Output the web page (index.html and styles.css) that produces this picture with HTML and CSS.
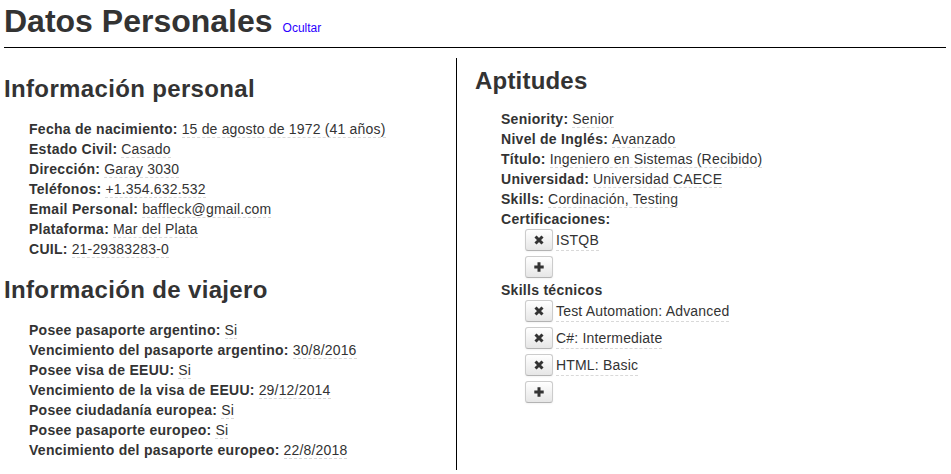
FILE: index.html
```html
<!DOCTYPE html>
<html lang="es">
<head>
<meta charset="utf-8">
<title>Datos Personales</title>
<link rel="stylesheet" href="styles.css">
</head>
<body>
<div class="page">
  <div class="title-bar">
    <h1 class="title">Datos Personales</h1>
    <a class="toggle" href="#">Ocultar</a>
  </div>
  <hr class="divider">
  <div class="columns">
    <section class="col col-left">
      <h2 class="section-title">Información personal</h2>
      <ul class="fields">
        <li><b class="label">Fecha de nacimiento:</b> <span class="value">15 de agosto de 1972 (41 años)</span></li>
        <li><b class="label">Estado Civil:</b> <span class="value">Casado</span></li>
        <li><b class="label">Dirección:</b> <span class="value">Garay 3030</span></li>
        <li><b class="label">Teléfonos:</b> <span class="value">+1.354.632.532</span></li>
        <li><b class="label">Email Personal:</b> <span class="value">baffleck@gmail.com</span></li>
        <li><b class="label">Plataforma:</b> <span class="value">Mar del Plata</span></li>
        <li><b class="label">CUIL:</b> <span class="value">21-29383283-0</span></li>
      </ul>
      <h2 class="section-title">Información de viajero</h2>
      <ul class="fields">
        <li><b class="label">Posee pasaporte argentino:</b> <span class="value">Si</span></li>
        <li><b class="label">Vencimiento del pasaporte argentino:</b> <span class="value">30/8/2016</span></li>
        <li><b class="label">Posee visa de EEUU:</b> <span class="value">Si</span></li>
        <li><b class="label">Vencimiento de la visa de EEUU:</b> <span class="value">29/12/2014</span></li>
        <li><b class="label">Posee ciudadanía europea:</b> <span class="value">Si</span></li>
        <li><b class="label">Posee pasaporte europeo:</b> <span class="value">Si</span></li>
        <li><b class="label">Vencimiento del pasaporte europeo:</b> <span class="value">22/8/2018</span></li>
      </ul>
    </section>
    <section class="col col-right">
      <h2 class="section-title section-title-right">Aptitudes</h2>
      <ul class="fields fields-right">
        <li><b class="label">Seniority:</b> <span class="value">Senior</span></li>
        <li><b class="label">Nivel de Inglés:</b> <span class="value">Avanzado</span></li>
        <li><b class="label">Título:</b> <span class="value">Ingeniero en Sistemas (Recibido)</span></li>
        <li><b class="label">Universidad:</b> <span class="value">Universidad CAECE</span></li>
        <li><b class="label">Skills:</b> <span class="value">Cordinación, Testing</span></li>
        <li class="group">
          <b class="label">Certificaciones:</b>
          <div class="chip-list">
            <div class="chip-row">
              <button class="btn" type="button"><svg class="icon" viewBox="0 0 10 10" width="10" height="10"><path d="M1.5 1.5 L8.5 8.5 M8.5 1.5 L1.5 8.5" /></svg></button>
              <span class="value">ISTQB</span>
            </div>
            <div class="chip-row">
              <button class="btn" type="button"><svg class="icon" viewBox="0 0 10 10" width="10" height="10"><path d="M5 0.3 V9.7 M0.3 5 H9.7" /></svg></button>
            </div>
          </div>
        </li>
        <li class="group">
          <b class="label">Skills técnicos</b>
          <div class="chip-list">
            <div class="chip-row">
              <button class="btn" type="button"><svg class="icon" viewBox="0 0 10 10" width="10" height="10"><path d="M1.5 1.5 L8.5 8.5 M8.5 1.5 L1.5 8.5" /></svg></button>
              <span class="value">Test Automation: Advanced</span>
            </div>
            <div class="chip-row">
              <button class="btn" type="button"><svg class="icon" viewBox="0 0 10 10" width="10" height="10"><path d="M1.5 1.5 L8.5 8.5 M8.5 1.5 L1.5 8.5" /></svg></button>
              <span class="value">C#: Intermediate</span>
            </div>
            <div class="chip-row">
              <button class="btn" type="button"><svg class="icon" viewBox="0 0 10 10" width="10" height="10"><path d="M1.5 1.5 L8.5 8.5 M8.5 1.5 L1.5 8.5" /></svg></button>
              <span class="value">HTML: Basic</span>
            </div>
            <div class="chip-row">
              <button class="btn" type="button"><svg class="icon" viewBox="0 0 10 10" width="10" height="10"><path d="M5 0.3 V9.7 M0.3 5 H9.7" /></svg></button>
            </div>
          </div>
        </li>
      </ul>
    </section>
  </div>
</div>
</body>
</html>
```
FILE: styles.css
```css
html, body {
  margin: 0;
  padding: 0;
  background: #fff;
}

body {
  font-family: "Liberation Sans", Arial, sans-serif;
  font-size: 14px;
  line-height: 20px;
  color: #333;
}

.page {
  padding: 0 5px 0 4px;
}

.title-bar {
  display: flex;
  align-items: baseline;
}

.title {
  margin: 0;
  font-size: 32px;
  line-height: 42px;
  font-weight: bold;
  color: #333;
}

.toggle {
  margin-left: 10px;
  font-size: 12px;
  color: #2b00ff;
  text-decoration: none;
}

.divider {
  margin: 5px 0 0 0;
  border: 0;
  border-top: 1px solid #000;
  height: 0;
}

.columns {
  display: grid;
  grid-template-columns: 452px 1fr;
  margin-top: 10px;
}

.col-right {
  border-left: 1px solid #000;
  padding-left: 18px;
}

.section-title {
  margin: 16px 0 15px 0;
  font-size: 24px;
  line-height: 30px;
  font-weight: bold;
  letter-spacing: 0.35px;
  color: #333;
}

.section-title-right {
  margin: 8px 0 13px 0;
  letter-spacing: 0.2px;
}

.fields {
  list-style: none;
  margin: 0 0 10px 0;
  padding: 0 0 0 25px;
}

.fields-right {
  padding-left: 26px;
}

.label {
  font-weight: bold;
  letter-spacing: 0.28px;
  color: #333;
}

.value {
  color: #333;
  letter-spacing: 0.18px;
  border-bottom: 1px dashed #d9d9d9;
}

.chip-list {
  display: flex;
  flex-direction: column;
  gap: 5px;
  padding-left: 24px;
  margin-bottom: 2px;
}

.chip-row {
  display: flex;
  align-items: center;
  gap: 3px;
  height: 22px;
}

.btn {
  display: flex;
  align-items: center;
  justify-content: center;
  width: 28px;
  height: 22px;
  padding: 0;
  margin: 0;
  border: 1px solid #cccccc;
  border-bottom-color: #b3b3b3;
  border-radius: 3px;
  background: linear-gradient(#ffffff, #e6e6e6);
  box-shadow: inset 0 1px 0 rgba(255, 255, 255, 0.2), 0 1px 2px rgba(0, 0, 0, 0.05);
  cursor: pointer;
}

.icon {
  display: block;
  fill: none;
  stroke: #333;
  stroke-width: 3;
  stroke-linecap: butt;
}
```
